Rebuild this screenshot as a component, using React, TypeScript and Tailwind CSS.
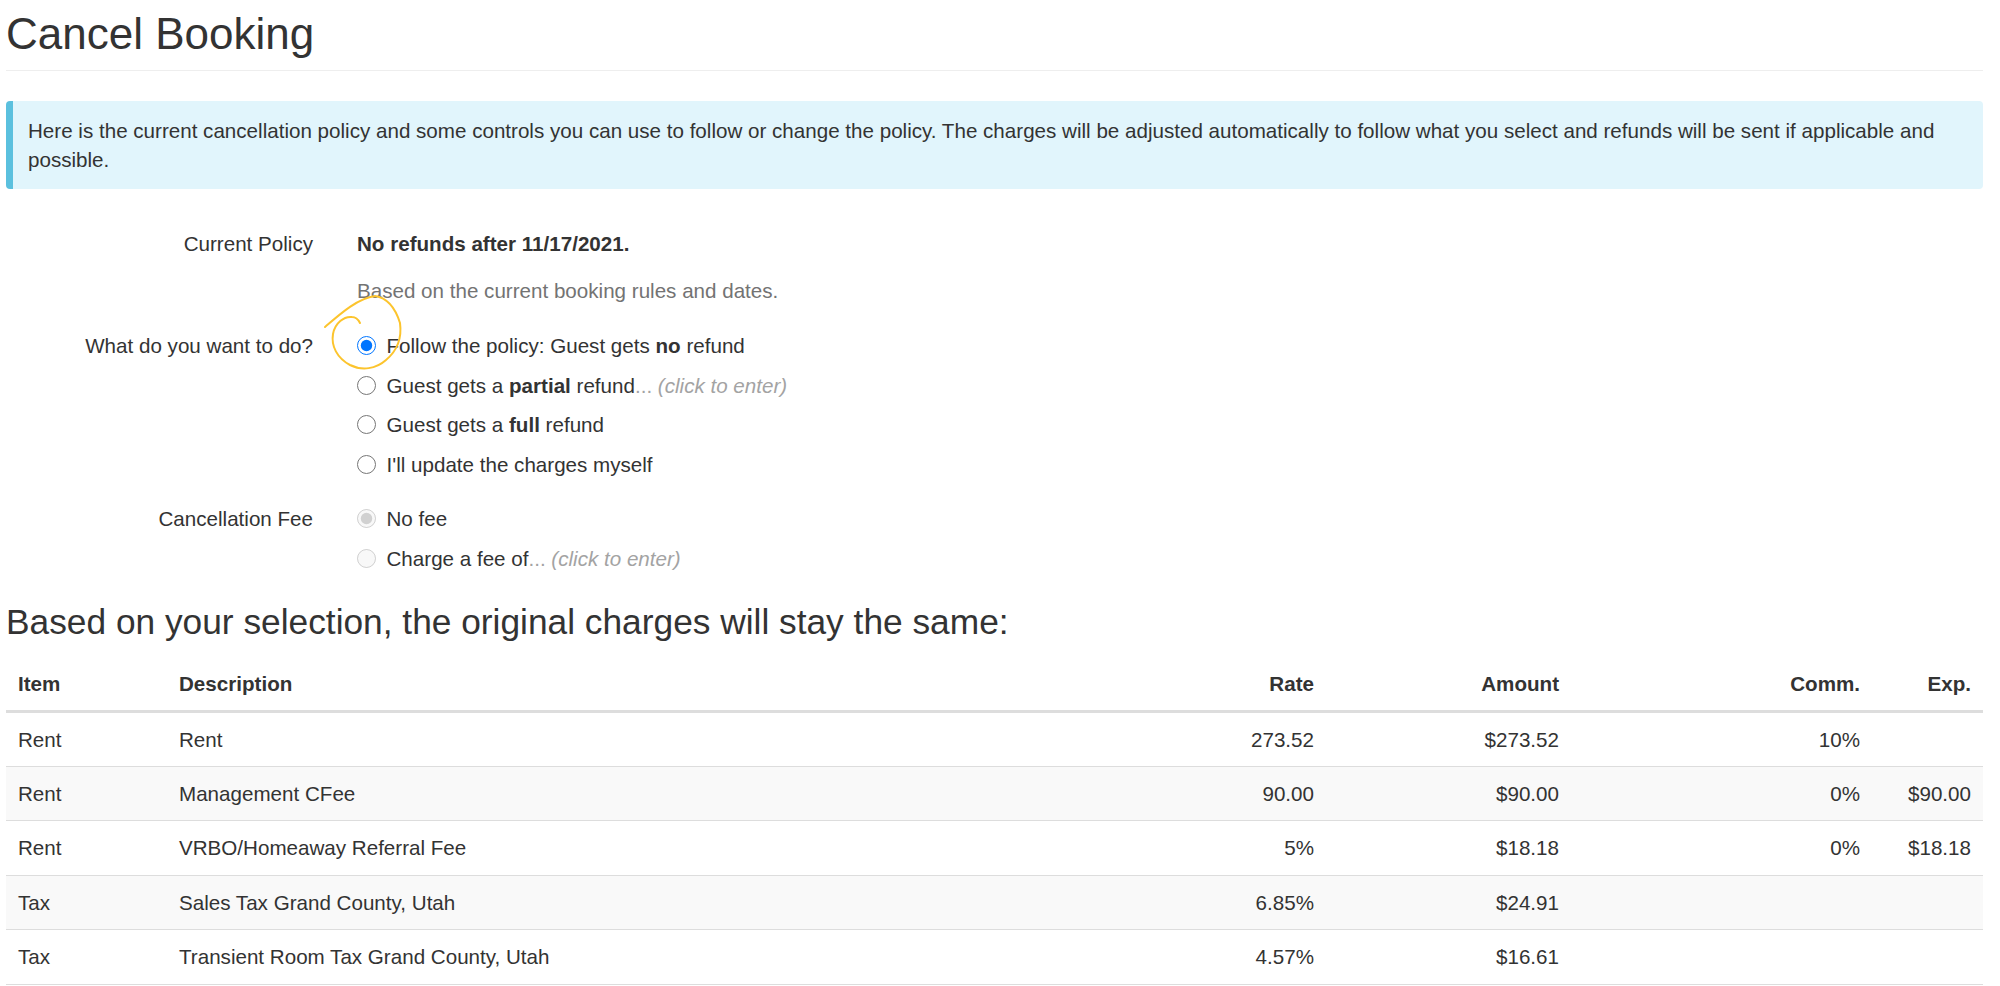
const font = "[font-family:'Liberation_Sans',Arial,sans-serif]"

type Row = { item: string; description: string; rate: string; amount: string; comm: string; exp: string; striped?: boolean }

const rows: Row[] = [
  { item: "Rent", description: "Rent", rate: "273.52", amount: "$273.52", comm: "10%", exp: "" },
  { item: "Rent", description: "Management CFee", rate: "90.00", amount: "$90.00", comm: "0%", exp: "$90.00", striped: true },
  { item: "Rent", description: "VRBO/Homeaway Referral Fee", rate: "5%", amount: "$18.18", comm: "0%", exp: "$18.18" },
  { item: "Tax", description: "Sales Tax Grand County, Utah", rate: "6.85%", amount: "$24.91", comm: "", exp: "", striped: true },
  { item: "Tax", description: "Transient Room Tax Grand County, Utah", rate: "4.57%", amount: "$16.61", comm: "", exp: "" },
]

function Radio({ name, checked, disabled, children }: { name: string; checked?: boolean; disabled?: boolean; children: React.ReactNode }) {
  return (
    <label className="flex h-[39.5px] items-center">
      <input type="radio" name={name} defaultChecked={checked} disabled={disabled} className="m-0 h-[19px] w-[19px] shrink-0" />
      <span className="ml-[10.5px]">{children}</span>
    </label>
  )
}

function Hint({ children }: { children: React.ReactNode }) {
  return <span className="text-[#a3a3a3]">... <i>{children}</i></span>
}

export default function App() {
  return (
    <div className={`relative h-[986px] overflow-hidden bg-white pl-[6px] pr-[17px] text-[20.6px] leading-[29.5px] text-[#333] ${font}`}>
      {/* Titre */}
      <div className="border-b border-[#eee] pb-[10px] pt-[7px]">
        <h1 className="text-[44px] leading-[53px]">Cancel Booking</h1>
      </div>

      {/* Alerte */}
      <div className="mt-[30px] rounded-[4px] border-l-[7px] border-[#5bc0de] bg-[#e1f5fc] py-[14.5px] pl-[15px] pr-[42px]">
        Here is the current cancellation policy and some controls you can use to follow or change the policy. The charges will be adjusted automatically to follow what you select and refunds will be sent if applicable and possible.
      </div>

      {/* Formulaire */}
      <div className="mt-[40px] grid grid-cols-[307px_1fr] gap-x-[44px]">
        <div className="text-right">Current Policy</div>
        <div>
          <div className="font-bold">No refunds after 11/17/2021.</div>
          <div className="mt-[17.5px] text-[#737373]">Based on the current booking rules and dates.</div>
        </div>

        <div className="mt-[20.5px] pt-[5px] text-right">What do you want to do?</div>
        <div className="mt-[20.5px]">
          <Radio name="policy" checked>Follow the policy: Guest gets <b>no</b> refund</Radio>
          <Radio name="policy">Guest gets a <b>partial</b> refund<Hint>(click to enter)</Hint></Radio>
          <Radio name="policy">Guest gets a <b>full</b> refund</Radio>
          <Radio name="policy">I'll update the charges myself</Radio>
        </div>

        <div className="mt-[15px] pt-[5px] text-right">Cancellation Fee</div>
        <div className="mt-[15px]">
          <Radio name="fee" checked disabled>No fee</Radio>
          <Radio name="fee" disabled>Charge a fee of<Hint>(click to enter)</Hint></Radio>
        </div>
      </div>

      {/* Tableau */}
      <h3 className="mt-[24.5px] text-[35.3px] leading-[38px]">Based on your selection, the original charges will stay the same:</h3>
      <table className="mt-[17px] w-full table-fixed border-collapse">
        <colgroup>
          <col className="w-[161px]" />
          <col />
          <col className="w-[150px]" />
          <col className="w-[245px]" />
          <col className="w-[301px]" />
          <col className="w-[111px]" />
        </colgroup>
        <thead>
          <tr className="h-[54px] border-b-[3px] border-[#ddd] font-bold">
            <th className="px-[12px] text-left">Item</th>
            <th className="px-[12px] text-left">Description</th>
            <th className="px-[12px] text-right">Rate</th>
            <th className="px-[12px] text-right">Amount</th>
            <th className="px-[12px] text-right">Comm.</th>
            <th className="px-[12px] text-right">Exp.</th>
          </tr>
        </thead>
        <tbody>
          {rows.map((r) => (
            <tr key={r.description} className={`h-[54.5px] border-b border-[#ddd] ${r.striped ? "bg-[#f9f9f9]" : ""}`}>
              <td className="px-[12px]">{r.item}</td>
              <td className="px-[12px]">{r.description}</td>
              <td className="px-[12px] text-right">{r.rate}</td>
              <td className="px-[12px] text-right">{r.amount}</td>
              <td className="px-[12px] text-right">{r.comm}</td>
              <td className="px-[12px] text-right">{r.exp}</td>
            </tr>
          ))}
        </tbody>
      </table>

      {/* Annotation jaune */}
      <svg className="absolute left-[320px] top-[290px] h-[90px] w-[90px]" viewBox="0 0 90 90" fill="none">
        <path
          d="M5 37 C 20 24, 38 8, 55 6 C 68 8, 76 20, 80 33 C 82 48, 78 60, 66 70 C 56 79, 42 81, 30 75 C 17 68, 11 56, 13 44 C 15 33, 24 26, 32 27 C 35 27, 38 29, 40 33"
          stroke="#fcc42d"
          strokeWidth="2"
          strokeLinecap="round"
        />
      </svg>
    </div>
  )
}
